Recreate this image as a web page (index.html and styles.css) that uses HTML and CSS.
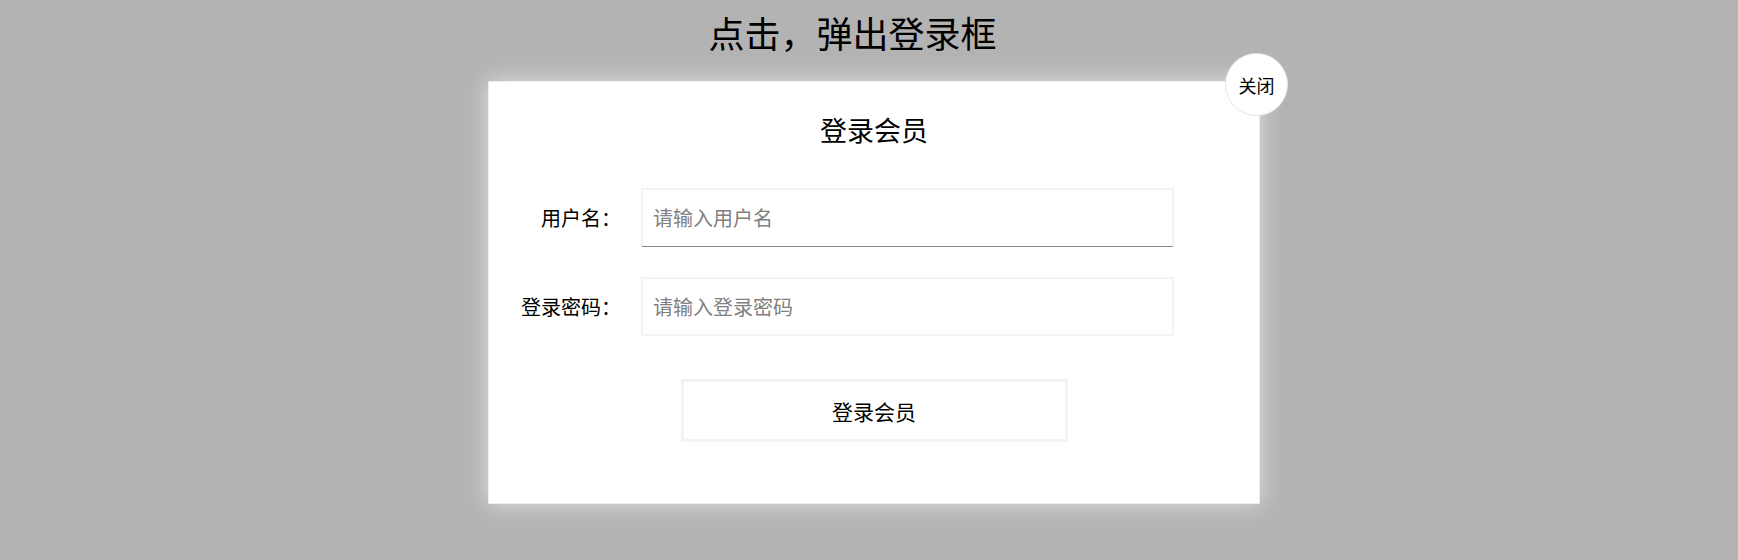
FILE: index.html
```html
<!DOCTYPE html>
<html lang="zh-CN">
<head>
<meta charset="utf-8">
<title>点击，弹出登录框</title>
<link rel="stylesheet" href="styles.css">
</head>
<body>
<h1 class="page-title">点击，弹出登录框</h1>
<div class="modal">
  <button class="close-btn" type="button">关闭</button>
  <h2 class="modal-title">登录会员</h2>
  <form class="login-form">
    <div class="form-row">
      <label class="form-label" for="username">用户名：</label>
      <input class="form-input form-input--active" id="username" type="text" placeholder="请输入用户名">
    </div>
    <div class="form-row form-row--second">
      <label class="form-label" for="password">登录密码：</label>
      <input class="form-input" id="password" type="password" placeholder="请输入登录密码">
    </div>
    <button class="submit-btn" type="button">登录会员</button>
  </form>
</div>
</body>
</html>
```
FILE: styles.css
```css
* {
  box-sizing: border-box;
}

html, body {
  margin: 0;
  padding: 0;
  height: 100%;
}

body {
  background: #b3b3b3;
  font-family: "Noto Sans CJK SC", "Noto Sans", sans-serif;
  color: #000;
  overflow: hidden;
}

.page-title {
  margin: 0;
  font-size: 36px;
  font-weight: normal;
  line-height: 65px;
  text-align: center;
  padding-right: 33px;
}

.modal {
  position: relative;
  width: 772px;
  height: 423px;
  margin: 16px 0 0 488px;
  background: #fff;
  border: 1px solid #ececec;
  box-shadow: 0 0 22px #e2e2e2;
}

.close-btn {
  position: absolute;
  top: -29px;
  right: -29px;
  width: 63px;
  height: 63px;
  border-radius: 50%;
  border: 1px solid #e6e6e6;
  background: #fff;
  font-family: inherit;
  font-size: 18px;
  line-height: 1;
  color: #000;
  padding: 0;
  display: flex;
  align-items: center;
  justify-content: center;
}

.modal-title {
  margin: 0;
  padding-top: 28px;
  font-size: 27px;
  font-weight: normal;
  line-height: 40px;
  text-align: center;
}

.login-form {
  display: flex;
  flex-direction: column;
  padding-top: 38px;
}

.form-row {
  display: flex;
  align-items: center;
  height: 59px;
}

.form-row--second {
  margin-top: 30px;
}

.form-label {
  width: 132px;
  flex: 0 0 132px;
  text-align: right;
  font-size: 20px;
  line-height: 28px;
}

.form-input {
  margin-left: 20px;
  width: 533px;
  height: 59px;
  border: 2px solid #f3f3f3;
  padding: 0 10px;
  font-family: inherit;
  font-size: 20px;
  color: #000;
  background: #fff;
  outline: none;
}

.form-input::placeholder {
  color: #808080;
}

.form-input--active {
  border-bottom: 1px solid #888;
  padding-bottom: 1px;
}

.submit-btn {
  align-self: center;
  margin-top: 43px;
  width: 387px;
  height: 63px;
  border: 3px solid #f3f3f3;
  background: #fff;
  font-family: inherit;
  font-size: 21px;
  color: #000;
  padding: 0;
}
```
